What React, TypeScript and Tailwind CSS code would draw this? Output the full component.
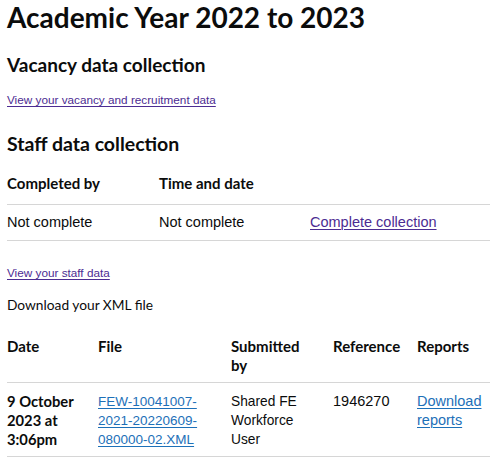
const heading = { fontFamily: 'Lato, "Noto Sans", sans-serif' };

export default function App() {
  return (
    <div className="bg-white text-[#0b0c0c] px-[7px] pr-[4px]" style={{ fontFamily: '"Liberation Sans", Arial, sans-serif' }}>
      <h1 className="text-[28px] leading-[32px] font-bold pt-[1px]" style={heading}>
        Academic Year 2022 to 2023
      </h1>

      <h2 className="mt-[20px] text-[19px] leading-[24px] font-bold" style={heading}>
        Vacancy data collection
      </h2>
      <a href="#" className="block mt-[16px] text-[11.75px] leading-[14px] text-[#4c2c92] underline underline-offset-2 decoration-1">
        View your vacancy and recruitment data
      </a>

      <h2 className="mt-[25px] text-[19.5px] leading-[24px] font-bold" style={heading}>
        Staff data collection
      </h2>

      <table className="mt-[18px] w-full border-collapse text-[14.5px] leading-[19px]">
        <thead>
          <tr className="border-b border-[#d6d6d6]">
            <th className="w-[152px] text-left font-bold text-[15px] pb-[11px]" style={heading}>Completed by</th>
            <th className="w-[151px] text-left font-bold text-[15px] pb-[11px]" style={heading}>Time and date</th>
            <th className="pb-[11px]"></th>
          </tr>
        </thead>
        <tbody>
          <tr className="border-b border-[#d6d6d6]">
            <td className="py-[8px]">Not complete</td>
            <td className="py-[8px]">Not complete</td>
            <td className="py-[8px]">
              <a href="#" className="text-[#4c2c92] underline underline-offset-2 decoration-1">Complete collection</a>
            </td>
          </tr>
        </tbody>
      </table>

      <a href="#" className="block mt-[25px] text-[11.75px] leading-[14px] text-[#4c2c92] underline underline-offset-2 decoration-1">
        View your staff data
      </a>

      <p className="mt-[16px] text-[13.75px] leading-[18px]" style={heading}>Download your XML file</p>

      <table className="mt-[23px] w-full border-collapse text-[14.5px] leading-[19px]">
        <thead>
          <tr className="border-b border-[#d6d6d6] align-top">
            <th className="w-[91px] text-left font-bold text-[15px] pb-[7px]" style={heading}>Date</th>
            <th className="w-[133px] text-left font-bold text-[15px] pb-[7px]" style={heading}>File</th>
            <th className="w-[102px] text-left font-bold text-[15px] pb-[7px]" style={heading}>Submitted<br />by</th>
            <th className="w-[84px] text-left font-bold text-[15px] pb-[7px]" style={heading}>Reference</th>
            <th className="text-left font-bold text-[15px] pb-[7px]" style={heading}>Reports</th>
          </tr>
        </thead>
        <tbody>
          <tr className="border-b border-[#d6d6d6] align-top">
            <td className="font-bold text-[14.75px] pt-[9px] pb-[7px]" style={heading}>9 October<br />2023 at<br />3:06pm</td>
            <td className="pt-[9px] pb-[7px]">
              <a href="#" className="text-[13.5px] text-[#1d70b8] underline underline-offset-2 decoration-1">FEW-10041007-<br />2021-20220609-<br />080000-02.XML</a>
            </td>
            <td className="pt-[9px] pb-[7px] text-[13.75px]">Shared FE<br />Workforce<br />User</td>
            <td className="pt-[9px] pb-[7px]">1946270</td>
            <td className="pt-[9px] pb-[7px]">
              <a href="#" className="text-[#1d70b8] underline underline-offset-2 decoration-1">Download<br />reports</a>
            </td>
          </tr>
        </tbody>
      </table>
    </div>
  );
}
